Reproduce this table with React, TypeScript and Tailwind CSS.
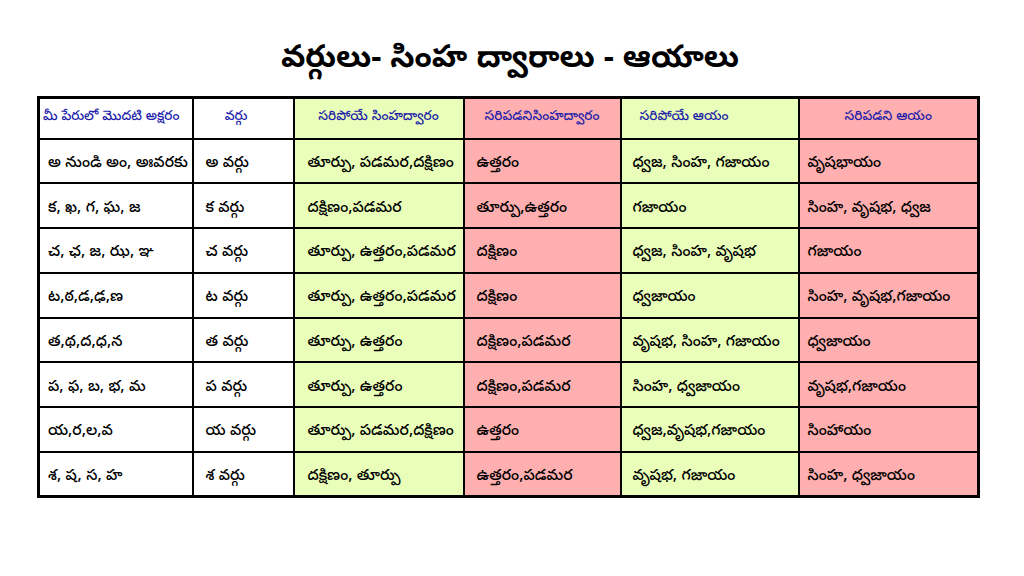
const rows = [
  ["అ నుండి అం, అఃవరకు", "అ వర్గు", "తూర్పు, పడమర,దక్షిణం", "ఉత్తరం", "ధ్వజ, సింహ, గజాయం", "వృషభాయం"],
  ["క, ఖ, గ, ఘ, జ", "క వర్గు", "దక్షిణం,పడమర", "తూర్పు,ఉత్తరం", "గజాయం", "సింహ, వృషభ, ధ్వజ"],
  ["చ, ఛ, జ, ఝ, ఞ", "చ వర్గు", "తూర్పు, ఉత్తరం,పడమర", "దక్షిణం", "ధ్వజ, సింహ, వృషభ", "గజాయం"],
  ["ట,ఠ,డ,ఢ,ణ", "ట వర్గు", "తూర్పు, ఉత్తరం,పడమర", "దక్షిణం", "ధ్వజాయం", "సింహ, వృషభ,గజాయం"],
  ["త,థ,ద,ధ,న", "త వర్గు", "తూర్పు, ఉత్తరం", "దక్షిణం,పడమర", "వృషభ, సింహ, గజాయం", "ధ్వజాయం"],
  ["ప, ఫ, బ, భ, మ", "ప వర్గు", "తూర్పు, ఉత్తరం", "దక్షిణం,పడమర", "సింహ, ధ్వజాయం", "వృషభ,గజాయం"],
  ["య,ర,ల,వ", "య వర్గు", "తూర్పు, పడమర,దక్షిణం", "ఉత్తరం", "ధ్వజ,వృషభ,గజాయం", "సింహాయం"],
  ["శ, ష, స, హ", "శ వర్గు", "దక్షిణం, తూర్పు", "ఉత్తరం,పడమర", "వృషభ, గజాయం", "సింహ, ధ్వజాయం"],
];

const font = "font-['Noto_Sans_Telugu','Noto_Sans','DejaVu_Sans',sans-serif]";

export default function App() {
  return (
    <div className={`w-[1024px] h-[576px] bg-white flex flex-col ${font}`}>
      <h1 className="mt-[39px] h-[44px] text-center pr-[4px] text-[31.5px] leading-[44px] font-bold text-black">
        వర్గులు- సింహ ద్వారాలు - ఆయాలు
      </h1>
      <table className="mt-[13px] ml-[37px] w-[941px] border-collapse border-[3px] border-black table-fixed">
        <colgroup>
          <col className="w-[154px]" />
          <col className="w-[101px]" />
          <col className="w-[170px]" />
          <col className="w-[157px]" />
          <col className="w-[178px]" />
          <col className="w-[180px]" />
        </colgroup>
        <thead>
          <tr className="h-[41px] text-[13.5px] font-medium text-[#1c1ca8]">
            <th className="border-2 border-black bg-white font-medium text-left pl-[3px] whitespace-nowrap">మీ పేరులో మొదటి అక్షరం</th>
            <th className="border-2 border-black bg-white font-medium text-center pr-[14px]">వర్గు</th>
            <th className="border-2 border-black bg-[#e9ffb9] font-medium text-center">సరిపోయే సింహద్వారం</th>
            <th className="border-2 border-black bg-[#ffafaf] font-medium text-center whitespace-nowrap">సరిపడనిసింహద్వారం</th>
            <th className="border-2 border-black bg-[#e9ffb9] font-medium text-left pl-[18px]">సరిపోయే ఆయం</th>
            <th className="border-2 border-black bg-[#ffafaf] font-medium text-center">సరిపడని ఆయం</th>
          </tr>
        </thead>
        <tbody>
          {rows.map((r, i) => (
            <tr key={i} className="h-[44.75px] text-[15.5px] font-medium text-black">
              <td className="border-2 border-black bg-white pl-[8px] pt-[7px] whitespace-nowrap">{r[0]}</td>
              <td className="border-2 border-black bg-white pl-[12px] pt-[7px] whitespace-nowrap">{r[1]}</td>
              <td className="border-2 border-black bg-[#e9ffb9] pl-[13px] pt-[7px] whitespace-nowrap">{r[2]}</td>
              <td className="border-2 border-black bg-[#ffafaf] pl-[12px] pt-[7px] whitespace-nowrap">{r[3]}</td>
              <td className="border-2 border-black bg-[#e9ffb9] pl-[11px] pt-[7px] whitespace-nowrap">{r[4]}</td>
              <td className="border-2 border-black bg-[#ffafaf] pl-[8px] pt-[7px] whitespace-nowrap">{r[5]}</td>
            </tr>
          ))}
        </tbody>
      </table>
    </div>
  );
}
